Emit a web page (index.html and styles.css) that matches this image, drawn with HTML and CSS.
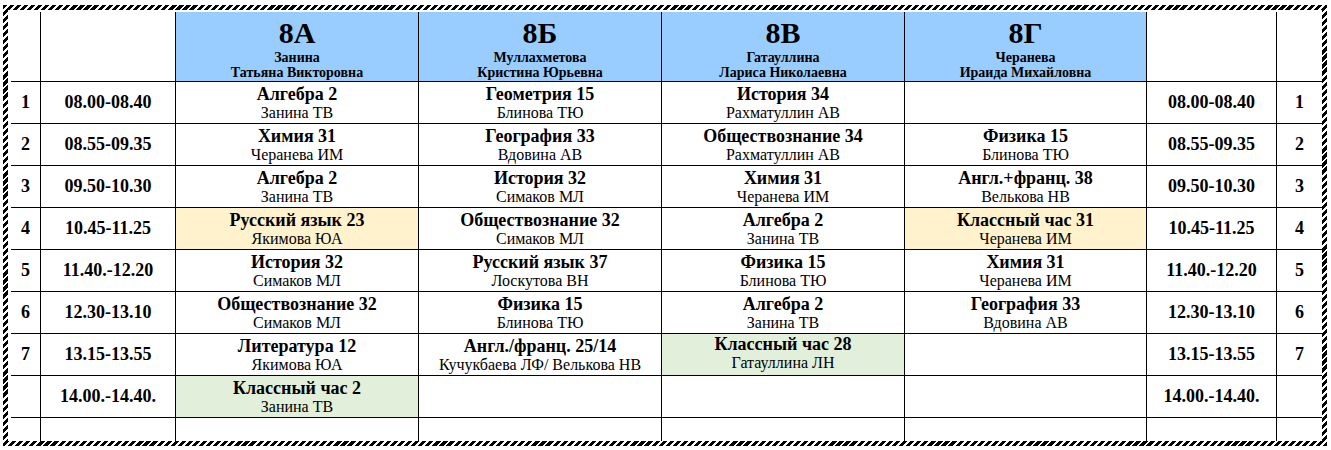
FILE: index.html
```html
<!DOCTYPE html>
<html lang="ru">
<head>
  <meta charset="UTF-8">
  <title>Расписание 8 классов</title>
  <link rel="stylesheet" href="styles.css">
</head>
<body>
  <div class="frame">
    <div class="sheet">
      <table class="schedule">
        <colgroup>
          <col class="c-num"><col class="c-time">
          <col class="c-class"><col class="c-class"><col class="c-class"><col class="c-class4">
          <col class="c-time2"><col class="c-num2">
        </colgroup>
        <tr class="head">
          <td></td><td></td>
          <td class="cls"><div class="cls-name">8А</div><div class="cls-teacher">Занина<br>Татьяна Викторовна</div></td>
          <td class="cls"><div class="cls-name">8Б</div><div class="cls-teacher">Муллахметова<br>Кристина Юрьевна</div></td>
          <td class="cls"><div class="cls-name">8В</div><div class="cls-teacher">Гатауллина<br>Лариса Николаевна</div></td>
          <td class="cls"><div class="cls-name">8Г</div><div class="cls-teacher">Черанева<br>Ираида Михайловна</div></td>
          <td></td><td></td>
        </tr>
        <tr>
          <td class="num">1</td><td class="time">08.00-08.40</td>
          <td><div class="subj">Алгебра 2</div><div class="tch">Занина ТВ</div></td>
          <td><div class="subj">Геометрия 15</div><div class="tch">Блинова ТЮ</div></td>
          <td><div class="subj">История 34</div><div class="tch">Рахматуллин АВ</div></td>
          <td></td>
          <td class="time">08.00-08.40</td><td class="num">1</td>
        </tr>
        <tr>
          <td class="num">2</td><td class="time">08.55-09.35</td>
          <td><div class="subj">Химия 31</div><div class="tch">Черанева ИМ</div></td>
          <td><div class="subj">География 33</div><div class="tch">Вдовина АВ</div></td>
          <td><div class="subj">Обществознание 34</div><div class="tch">Рахматуллин АВ</div></td>
          <td><div class="subj">Физика 15</div><div class="tch">Блинова ТЮ</div></td>
          <td class="time">08.55-09.35</td><td class="num">2</td>
        </tr>
        <tr>
          <td class="num">3</td><td class="time">09.50-10.30</td>
          <td><div class="subj">Алгебра 2</div><div class="tch">Занина ТВ</div></td>
          <td><div class="subj">История 32</div><div class="tch">Симаков МЛ</div></td>
          <td><div class="subj">Химия 31</div><div class="tch">Черанева ИМ</div></td>
          <td><div class="subj">Англ.+франц. 38</div><div class="tch">Велькова НВ</div></td>
          <td class="time">09.50-10.30</td><td class="num">3</td>
        </tr>
        <tr>
          <td class="num">4</td><td class="time">10.45-11.25</td>
          <td class="yellow"><div class="subj">Русский язык 23</div><div class="tch">Якимова ЮА</div></td>
          <td><div class="subj">Обществознание 32</div><div class="tch">Симаков МЛ</div></td>
          <td><div class="subj">Алгебра 2</div><div class="tch">Занина ТВ</div></td>
          <td class="yellow"><div class="subj">Классный час 31</div><div class="tch">Черанева ИМ</div></td>
          <td class="time">10.45-11.25</td><td class="num">4</td>
        </tr>
        <tr>
          <td class="num">5</td><td class="time">11.40.-12.20</td>
          <td><div class="subj">История 32</div><div class="tch">Симаков МЛ</div></td>
          <td><div class="subj">Русский язык 37</div><div class="tch">Лоскутова ВН</div></td>
          <td><div class="subj">Физика 15</div><div class="tch">Блинова ТЮ</div></td>
          <td><div class="subj">Химия 31</div><div class="tch">Черанева ИМ</div></td>
          <td class="time">11.40.-12.20</td><td class="num">5</td>
        </tr>
        <tr>
          <td class="num">6</td><td class="time">12.30-13.10</td>
          <td><div class="subj">Обществознание 32</div><div class="tch">Симаков МЛ</div></td>
          <td><div class="subj">Физика 15</div><div class="tch">Блинова ТЮ</div></td>
          <td><div class="subj">Алгебра 2</div><div class="tch">Занина ТВ</div></td>
          <td><div class="subj">География 33</div><div class="tch">Вдовина АВ</div></td>
          <td class="time">12.30-13.10</td><td class="num">6</td>
        </tr>
        <tr>
          <td class="num">7</td><td class="time">13.15-13.55</td>
          <td><div class="subj">Литература 12</div><div class="tch">Якимова ЮА</div></td>
          <td><div class="subj">Англ./франц. 25/14</div><div class="tch">Кучукбаева ЛФ/ Велькова НВ</div></td>
          <td class="green raised"><div class="subj">Классный час 28</div><div class="tch">Гатауллина ЛН</div></td>
          <td></td>
          <td class="time">13.15-13.55</td><td class="num">7</td>
        </tr>
        <tr>
          <td class="num"></td><td class="time">14.00.-14.40.</td>
          <td class="green"><div class="subj">Классный час 2</div><div class="tch">Занина ТВ</div></td>
          <td></td><td></td><td></td>
          <td class="time">14.00.-14.40.</td><td class="num"></td>
        </tr>
        <tr class="tail">
          <td></td><td></td><td></td><td></td><td></td><td></td><td></td><td></td>
        </tr>
      </table>
    </div>
  </div>
</body>
</html>
```

FILE: styles.css
```css
body { margin: 0; background: #fff; font-family: "Liberation Serif", "Times New Roman", serif; color: #000; }
.frame { margin: 5px 0 0 3px; width: 1324px; padding: 5px; box-sizing: border-box; background: repeating-linear-gradient(-45deg, #000 0 3px, #fff 3px 5px); }
.sheet { background: #fff; padding: 2px 0 0 3px; }
.schedule { border-collapse: separate; border-spacing: 0; table-layout: fixed; width: 1311px; }
.schedule td { box-sizing: border-box; padding: 0; border-right: 1px solid #000; border-bottom: 1px solid #000; text-align: center; vertical-align: middle; height: 42px; }
.schedule td:last-child { border-right: none; }
.schedule tr.tail td { border-bottom: none; height: 23px; }
.schedule tr.head td { height: 70px; vertical-align: bottom; padding-bottom: 1px; }
.c-num { width: 30px; }
.c-time { width: 135px; }
.c-class { width: 243px; }
.c-class4 { width: 242px; }
.c-time2 { width: 130px; }
.c-num2 { width: 45px; }
.cls { background: #99ccff; }
.cls-name { font-size: 30px; font-weight: bold; line-height: 34px; }
.cls-teacher { font-size: 14px; font-weight: bold; line-height: 15px; }
.num, .time { font-size: 18px; font-weight: bold; }
.subj { font-size: 18px; font-weight: bold; line-height: 20px; }
.tch { font-size: 16px; line-height: 18px; }
.yellow { background: #fff2cc; }
.green { background: #e2efda; }
.schedule td.raised { padding-bottom: 3px; }
```
